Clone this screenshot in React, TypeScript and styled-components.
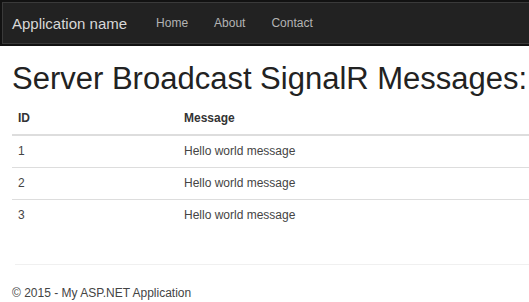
import React, { FC } from "react";
import styled, { createGlobalStyle } from "styled-components";

const GlobalStyle = createGlobalStyle`
	html, body {
		margin: 0;
		padding: 0;
		background: #fff;
		overflow: hidden;
	}
	body {
		font-family: "Liberation Sans", Arial, Helvetica, sans-serif;
		color: #333;
	}
`;

const Navbar = styled.nav`
	height: 46px;
	box-sizing: border-box;
	margin-right: -4px;
	background: #222;
	border: 2px solid #121212;
	box-shadow: inset 0 0 0 1px #3a3a3a;
	display: flex;
	align-items: center;
	padding-left: 10px;
`;

const Brand = styled.a`
	font-size: 15px;
	color: #d8d8d8;
	margin-right: 29px;
`;

const NavLink = styled.a`
	font-size: 12px;
	color: #b4b4b4;
	margin-right: 26px;
`;

const Container = styled.main`
	padding-left: 12px;
`;

const Heading = styled.h1`
	font-size: 31px;
	font-weight: 400;
	color: #222;
	margin: 16px 0 7px;
	line-height: 34px;
	white-space: nowrap;
`;

const Table = styled.table`
	width: calc(100% + 6px);
	border-collapse: collapse;
	table-layout: fixed;
	font-size: 12px;
`;

const Th = styled.th<{ $w?: number }>`
	text-align: left;
	font-weight: 700;
	color: #333;
	padding: 8px 6px 8px;
	line-height: 15px;
	border-bottom: 2px solid #ddd;
	width: ${(p) => (p.$w ? `${p.$w}px` : "auto")};
`;

const Td = styled.td`
	padding: 8px 6px;
	line-height: 15px;
	color: #444;
	border-top: 1px solid #ddd;
`;

const Footer = styled.footer`
	margin-top: 33px;
	margin-left: 3px;
	border-top: 1px solid #f0f0f0;
`;

const FooterText = styled.p`
	margin: 0 0 0 -3px;
	padding-top: 21px;
	font-size: 12px;
	color: #444;
`;

type Row = { id: number; message: string };

const rows: Row[] = [
	{ id: 1, message: "Hello world message" },
	{ id: 2, message: "Hello world message" },
	{ id: 3, message: "Hello world message" },
];

const MessageTable: FC<{ rows: Row[] }> = ({ rows }) => (
	<Table>
		<thead>
			<tr>
				<Th $w={154}>ID</Th>
				<Th>Message</Th>
			</tr>
		</thead>
		<tbody>
			{rows.map((r) => (
				<tr key={r.id}>
					<Td>{r.id}</Td>
					<Td>{r.message}</Td>
				</tr>
			))}
		</tbody>
	</Table>
);

const App: FC = () => {
	return (
		<>
			<GlobalStyle />
			<Navbar>
				<Brand>Application name</Brand>
				<NavLink>Home</NavLink>
				<NavLink>About</NavLink>
				<NavLink>Contact</NavLink>
			</Navbar>
			<Container>
				<Heading>Server Broadcast SignalR Messages:</Heading>
				<MessageTable rows={rows} />
				<Footer>
					<FooterText>© 2015 - My ASP.NET Application</FooterText>
				</Footer>
			</Container>
		</>
	);
};

export default App;
